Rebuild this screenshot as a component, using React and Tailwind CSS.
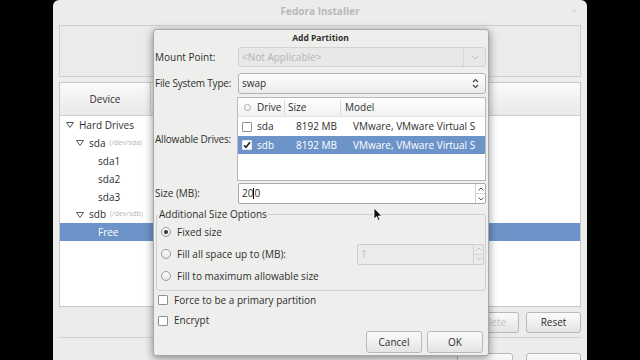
import React from 'react'

const FONT = { fontFamily: '"Open Sans", "DejaVu Sans", sans-serif' }

function Radio({ checked }) {
  return (
    <span className="flex h-[10px] w-[10px] items-center justify-center rounded-full border border-[#9a9a9a] bg-gradient-to-b from-white to-[#e6e6e6]">
      {checked && <span className="h-[4px] w-[4px] rounded-full bg-[#333]" />}
    </span>
  )
}

function Check({ checked, light }) {
  return (
    <span
      className={`flex h-[10px] w-[10px] items-center justify-center rounded-[1px] border ${
        light ? 'border-[#dfe8f5] bg-white' : 'border-[#8f8f8f] bg-white'
      }`}
    >
      {checked && (
        <svg width="8" height="8" viewBox="0 0 8 8">
          <path d="M1 4.2 L3 6.3 L7 1.2" fill="none" stroke="#222" strokeWidth="1.6" />
        </svg>
      )}
    </span>
  )
}

function SpinArrows({ disabled }) {
  const c = disabled ? '#c4c4c4' : '#555'
  return (
    <div className="flex w-[10px] flex-col border-l border-[#cfcfcf]">
      <div className="flex flex-1 items-center justify-center border-b border-[#d6d6d6]">
        <svg width="6" height="4" viewBox="0 0 6 4">
          <path d="M0.5 3.5 L3 1 L5.5 3.5" fill="none" stroke={c} strokeWidth="1" />
        </svg>
      </div>
      <div className="flex flex-1 items-center justify-center">
        <svg width="6" height="4" viewBox="0 0 6 4">
          <path d="M0.5 0.5 L3 3 L5.5 0.5" fill="none" stroke={c} strokeWidth="1" />
        </svg>
      </div>
    </div>
  )
}

function Tri() {
  return (
    <svg width="8" height="6" viewBox="0 0 8 6" className="mr-[5px]">
      <path d="M0.5 0.5 L7.5 0.5 L4 5.5 Z" fill="none" stroke="#555" strokeWidth="1" />
    </svg>
  )
}

function Button({ children, disabled, className = '' }) {
  return (
    <div
      className={`flex items-center justify-center rounded-[3px] border border-[#b9b9b9] bg-gradient-to-b from-[#fbfbfb] to-[#e4e4e4] text-[10px] ${
        disabled ? 'text-[#c2c2c2]' : 'text-[#2e2e2e]'
      } ${className}`}
    >
      {children}
    </div>
  )
}

function AddPartition() {
  return (
    <div className="absolute left-[153px] top-[29px] flex h-[327px] w-[336px] flex-col rounded-[3px] border border-[#a8a8a8] bg-[#eeeeec] pl-[1px] pr-[2px] text-[10px] text-[#2e2e2e] shadow-[0_2px_8px_rgba(0,0,0,0.45)]">
      <div className="flex h-[17px] items-center justify-center text-[8.5px] font-bold">Add Partition</div>

      <div className="flex h-[20px] items-center">
        <div className="w-[83px]">Mount Point:</div>
        <div className="flex h-[20px] flex-1 rounded-[3px] border border-[#d2d2d2] bg-[#e8e8e8]">
          <div className="flex flex-1 items-center pl-[3px] text-[#b4b4b4]">&lt;Not Applicable&gt;</div>
          <div className="flex w-[22px] items-center justify-center border-l border-[#d6d6d6]">
            <svg width="8" height="5" viewBox="0 0 8 5">
              <path d="M0.5 0.5 L4 4 L7.5 0.5" fill="none" stroke="#b8b8b8" strokeWidth="1" />
            </svg>
          </div>
        </div>
      </div>

      <div className="mt-[6px] flex h-[21px] items-center">
        <div className="w-[83px] tracking-[-0.2px]">File System Type:</div>
        <div className="flex h-[21px] flex-1 items-center rounded-[3px] border border-[#b3b3b3] bg-gradient-to-b from-[#fdfdfd] to-[#ebebeb] pl-[3px] pr-[6px]">
          <div className="flex-1">swap</div>
          <svg width="7" height="11" viewBox="0 0 7 11">
            <path d="M1 4 L3.5 1.5 L6 4 M1 7 L3.5 9.5 L6 7" fill="none" stroke="#444" strokeWidth="1.1" />
          </svg>
        </div>
      </div>

      <div className="mt-[3px] flex h-[84px]">
        <div className="flex w-[82px] items-center tracking-[-0.2px]">Allowable Drives:</div>
        <div className="flex flex-1 flex-col border border-[#b8b8b8] bg-white">
          <div className="flex h-[19px] items-center border-b border-[#e2e2e2] bg-gradient-to-b from-white to-[#f1f1f1]">
            <div className="flex w-[18px] justify-center">
              <span className="h-[7px] w-[7px] rounded-full border border-[#aaa]" />
            </div>
            <div className="w-[29px] border-r border-[#d8d8d8] pl-[1px]">Drive</div>
            <div className="w-[56px] border-r border-[#d8d8d8] pl-[3px]">Size</div>
            <div className="pl-[4px]">Model</div>
          </div>
          <div className="flex h-[19px] items-center">
            <div className="flex w-[18px] justify-center">
              <Check />
            </div>
            <div className="w-[29px] pl-[1px]">sda</div>
            <div className="w-[56px] pr-[4px] text-right">8192 MB</div>
            <div className="whitespace-nowrap pl-[12px]">VMware, VMware Virtual S</div>
          </div>
          <div className="flex h-[18px] items-center bg-[#6d94c9] text-white">
            <div className="flex w-[18px] justify-center">
              <Check checked light />
            </div>
            <div className="w-[29px] pl-[1px]">sdb</div>
            <div className="w-[56px] pr-[4px] text-right">8192 MB</div>
            <div className="whitespace-nowrap pl-[12px]">VMware, VMware Virtual S</div>
          </div>
        </div>
      </div>

      <div className="mt-[2px] flex h-[21px] items-center">
        <div className="w-[83px]">Size (MB):</div>
        <div className="flex h-[21px] flex-1 rounded-[2px] border border-[#a8a8a8] bg-white">
          <div className="flex flex-1 items-center pl-[3px]">
            20<span className="inline-block h-[11px] w-px bg-black" />0
          </div>
          <SpinArrows />
        </div>
      </div>

      <div className="relative ml-[1px] mt-[10px] flex h-[77px] flex-col rounded-[3px] border border-[#d0d0d0] pl-[4px] pt-[6px]">
        <div className="absolute -top-[7px] left-[1px] bg-[#eeeeec] px-[1px] leading-[13px]">Additional Size Options</div>
        <div className="flex h-[22px] items-center gap-[6px]">
          <Radio checked />
          <span>Fixed size</span>
        </div>
        <div className="flex h-[22px] items-center gap-[6px]">
          <Radio />
          <span className="w-[174px]">Fill all space up to (MB):</span>
          <div className="mr-[1px] flex h-[21px] flex-1 rounded-[2px] border border-[#cdcdcd] bg-[#ebebeb]">
            <div className="flex flex-1 items-center pl-[3px] text-[#b8b8b8]">1</div>
            <SpinArrows disabled />
          </div>
        </div>
        <div className="flex h-[22px] items-center gap-[6px]">
          <Radio />
          <span>Fill to maximum allowable size</span>
        </div>
      </div>

      <div className="flex h-[18px] items-center gap-[6px] pl-[3px]">
        <Check />
        <span>Force to be a primary partition</span>
      </div>
      <div className="mt-[1px] flex h-[21px] items-center gap-[6px] pl-[3px]">
        <Check />
        <span>Encrypt</span>
      </div>

      <div className="flex justify-end gap-[5px] pr-[3px]">
        <Button className="h-[22px] w-[56px]">Cancel</Button>
        <Button className="h-[22px] w-[56px]">OK</Button>
      </div>
    </div>
  )
}

function Cursor() {
  return (
    <svg className="absolute left-[373px] top-[207px]" width="10" height="15" viewBox="0 0 10 15">
      <path d="M1 1 L1 12 L3.6 9.6 L5.4 13.6 L7 12.9 L5.3 9 L8.8 9 Z" fill="#111" stroke="#fff" strokeWidth="0.8" />
    </svg>
  )
}

export default function App() {
  return (
    <div className="relative h-[360px] w-[640px] overflow-hidden bg-black" style={FONT}>
      <div className="ml-[53px] flex h-[380px] w-[534px] flex-col rounded-t-[6px] bg-[#ececec] px-[6px] text-[10px] text-[#2e2e2e]">
        <div className="relative flex h-[22px] items-center justify-center text-[10px] font-bold text-[#b9b9b9]">
          Fedora Installer
          <span className="absolute right-[4px] top-[4px] text-[9px] font-normal text-[#cfcfcf]">×</span>
        </div>

        <div className="mt-[3px] h-[52px] border border-[#cfcfcf] bg-[#ebebeb]" />

        <div className="mt-[5px] flex h-[225px] flex-col border border-[#c8c8c8] bg-white">
          <div className="flex h-[33px] border-b border-[#cfcfcf] bg-gradient-to-b from-[#fafafa] to-[#e9e9e9]">
            <div className="flex w-[91px] items-center justify-center border-r border-[#d4d4d4]">Device</div>
          </div>
          <div className="flex flex-col">
            <div className="flex h-[18px] items-center pl-[6px]">
              <Tri />
              Hard Drives
            </div>
            <div className="flex h-[18px] items-center pl-[16px]">
              <Tri />
              sda<span className="ml-[4px] text-[7px] text-[#b5b5b5]">(/dev/sda)</span>
            </div>
            <div className="flex h-[18px] items-center pl-[38px]">sda1</div>
            <div className="flex h-[18px] items-center pl-[38px]">sda2</div>
            <div className="flex h-[18px] items-center pl-[38px]">sda3</div>
            <div className="flex h-[17px] items-center pl-[16px]">
              <Tri />
              sdb<span className="ml-[4px] text-[7px] text-[#b5b5b5]">(/dev/sdb)</span>
            </div>
            <div className="flex h-[18px] items-center bg-[#6d94c9] pl-[38px] text-white">Free</div>
          </div>
        </div>

        <div className="mt-[5px] flex justify-end gap-[7px]">
          <Button disabled className="h-[21px] w-[56px]">Delete</Button>
          <Button className="h-[21px] w-[55px]">Reset</Button>
        </div>

        <div className="mt-[4px] border-t border-[#d2d2d2]" />

        <div className="mt-[15px] flex justify-end gap-[13px]">
          <Button className="h-[22px] w-[56px]">Back</Button>
          <Button className="h-[22px] w-[55px]">Next</Button>
        </div>
      </div>

      <AddPartition />
      <Cursor />
    </div>
  )
}
